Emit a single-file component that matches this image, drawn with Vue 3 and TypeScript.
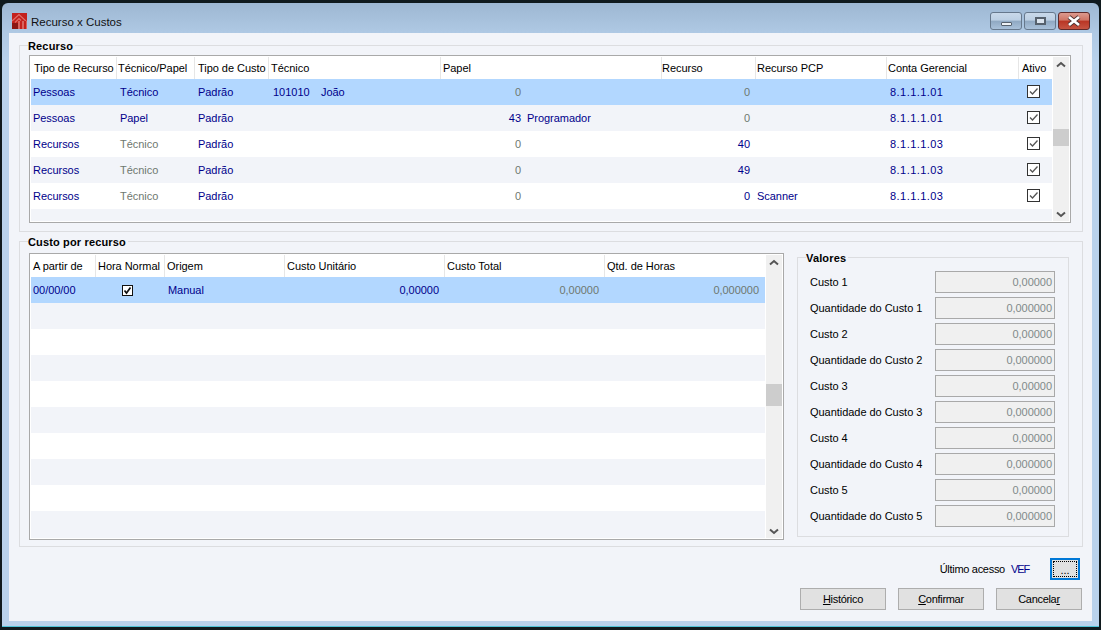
<script setup lang="ts">
const topCols = ['Tipo de Recurso','Técnico/Papel','Tipo de Custo','Técnico','Papel','Recurso','Recurso PCP','Conta Gerencial','Ativo']
const topRows = [
  { t:'Pessoas', p:'Técnico', c:'Padrão', tec:'101010', nome:'João', pap:'0', papN:'', r:'0', pcp:'', conta:'8.1.1.1.01', gray:false },
  { t:'Pessoas', p:'Papel', c:'Padrão', tec:'', nome:'', pap:'43', papN:'Programador', r:'0', pcp:'', conta:'8.1.1.1.01', gray:false },
  { t:'Recursos', p:'Técnico', c:'Padrão', tec:'', nome:'', pap:'0', papN:'', r:'40', pcp:'', conta:'8.1.1.1.03', gray:true },
  { t:'Recursos', p:'Técnico', c:'Padrão', tec:'', nome:'', pap:'0', papN:'', r:'49', pcp:'', conta:'8.1.1.1.03', gray:true },
  { t:'Recursos', p:'Técnico', c:'Padrão', tec:'', nome:'', pap:'0', papN:'', r:'0', pcp:'Scanner', conta:'8.1.1.1.03', gray:true },
]
const costCols = ['A partir de','Hora Normal','Origem','Custo Unitário','Custo Total','Qtd. de Horas']
const emptyRows = [1,2,3,4,5,6,7,8]
const valores = [
  ['Custo 1','0,00000'],['Quantidade do Custo 1','0,000000'],
  ['Custo 2','0,00000'],['Quantidade do Custo 2','0,000000'],
  ['Custo 3','0,00000'],['Quantidade do Custo 3','0,000000'],
  ['Custo 4','0,00000'],['Quantidade do Custo 4','0,000000'],
  ['Custo 5','0,00000'],['Quantidade do Custo 5','0,000000'],
]
</script>

<template>
  <div class="screen">
    <div class="window">
      <header class="titlebar">
        <svg class="logo" width="15" height="16" viewBox="0 0 15 16">
          <rect width="15" height="16" fill="#c4211c"/>
          <rect y="10" width="6" height="6" fill="#8c1613"/>
          <path d="M0 8 L7 1.5 L15 9 M3 9.5 L7 5.5 L9 7.5" fill="none" stroke="#e0706a" stroke-width="1.2"/>
          <rect x="6.5" y="8" width="8.5" height="8" fill="#eaa9a3"/>
          <rect x="7.5" y="8" width="3" height="8" fill="#c4211c"/>
          <rect x="11.5" y="8" width="3" height="8" fill="#c4211c"/>
        </svg>
        <span class="title">Recurso x Custos</span>
        <div class="controls">
          <div class="ctl"><i class="min"></i></div>
          <div class="ctl"><i class="max"></i></div>
          <div class="ctl close">
            <svg width="18" height="12" viewBox="0 0 18 12">
              <path d="M4 2 L14 10 M14 2 L4 10" stroke="#4a3030" stroke-width="4.4"/>
              <path d="M4 2 L14 10 M14 2 L4 10" stroke="#fff" stroke-width="2.8"/>
            </svg>
          </div>
        </div>
      </header>

      <main class="client">
        <fieldset class="group g-top">
          <legend>Recurso</legend>
          <div class="grid-box">
            <div class="grid-main">
              <div class="row head cols-top">
                <div v-for="c in topCols" :key="c" class="hcell">{{ c }}</div>
              </div>
              <div v-for="(r,i) in topRows" :key="i" class="row cols-top" :class="i === 0 ? 'sel' : i % 2 ? 'alt' : 'plain'">
                <div class="cell">{{ r.t }}</div>
                <div class="cell pl3" :class="{ dim: r.gray }">{{ r.p }}</div>
                <div class="cell pl3">{{ r.c }}</div>
                <div class="cell tec"><span class="num">{{ r.tec }}</span><span>{{ r.nome }}</span></div>
                <div class="cell pap"><span class="papnum" :class="{ dim: r.pap === '0' }">{{ r.pap }}</span><span>{{ r.papN }}</span></div>
                <div class="cell right rec" :class="{ dim: r.r === '0' && !r.pcp }">{{ r.r }}</div>
                <div class="cell pcp">{{ r.pcp }}</div>
                <div class="cell conta">{{ r.conta }}</div>
                <div class="cell chk">
                  <svg width="13" height="13" viewBox="0 0 13 13"><rect x=".5" y=".5" width="12" height="12" fill="#fff" stroke="#333"/><path d="M3 6.5 L5.5 9 L10.5 3.5" fill="none" stroke="#555" stroke-width="1.3"/></svg>
                </div>
              </div>
            </div>
            <div class="sbar">
              <svg class="arrow" width="10" height="7" viewBox="0 0 10 7"><path d="M1 5.5 L5 2 L9 5.5" fill="none" stroke="#555" stroke-width="2"/></svg>
              <div class="track top-track"><div class="thumb"></div></div>
              <svg class="arrow" width="10" height="7" viewBox="0 0 10 7"><path d="M1 1.5 L5 5 L9 1.5" fill="none" stroke="#555" stroke-width="2"/></svg>
            </div>
          </div>
        </fieldset>

        <fieldset class="group g-cost">
          <legend>Custo por recurso</legend>
          <div class="cost-layout">
            <div class="grid-box cost-box">
              <div class="grid-main">
                <div class="row head cols-cost">
                  <div v-for="c in costCols" :key="c" class="hcell">{{ c }}</div>
                </div>
                <div class="row cols-cost sel">
                  <div class="cell">00/00/00</div>
                  <div class="cell hn">
                    <svg width="11" height="11" viewBox="0 0 11 11"><rect x=".5" y=".5" width="10" height="10" fill="#fff" stroke="#111"/><path d="M2.5 5.5 L4.5 8 L8.5 2.5" fill="none" stroke="#111" stroke-width="1.7"/></svg>
                  </div>
                  <div class="cell origem">Manual</div>
                  <div class="cell right pr6">0,00000</div>
                  <div class="cell right pr6 dim">0,00000</div>
                  <div class="cell right pr7 dim">0,000000</div>
                </div>
                <div v-for="n in emptyRows" :key="n" class="row" :class="n % 2 ? 'alt' : 'plain'"></div>
              </div>
              <div class="sbar">
                <svg class="arrow" width="10" height="7" viewBox="0 0 10 7"><path d="M1 5.5 L5 2 L9 5.5" fill="none" stroke="#555" stroke-width="2"/></svg>
                <div class="track cost-track"><div class="thumb"></div></div>
                <svg class="arrow" width="10" height="7" viewBox="0 0 10 7"><path d="M1 1.5 L5 5 L9 1.5" fill="none" stroke="#555" stroke-width="2"/></svg>
              </div>
            </div>
            <fieldset class="group g-val">
              <legend>Valores</legend>
              <div v-for="v in valores" :key="v[0]" class="val-row">
                <span>{{ v[0] }}</span>
                <div class="input">{{ v[1] }}</div>
              </div>
            </fieldset>
          </div>
        </fieldset>

        <div class="access">
          <span class="ult">Último acesso</span>
          <span class="vef">VEF</span>
          <button class="btn-dots"><span>...</span></button>
        </div>
        <div class="actions">
          <button class="btn"><u>H</u>istórico</button>
          <button class="btn"><u>C</u>onfirmar</button>
          <button class="btn">Cancela<u>r</u></button>
        </div>
      </main>
    </div>
  </div>
</template>

<style>
html, body { margin: 0; background: #101a1e; }
</style>

<style scoped>
.screen { width: 1101px; height: 630px; box-sizing: border-box; padding: 3px 2px 3px 2px; background: #101a1e; overflow: hidden; font: 11px "Liberation Sans", "Noto Sans", sans-serif; color: #000; letter-spacing: -.04px; }
.window { height: 624px; display: flex; flex-direction: column; background: #b9d2ec; border-radius: 6px 6px 0 0; padding: 0 7px 6px 7px; box-sizing: border-box; background-image: linear-gradient(180deg, #9db7d2 0, #afc9e4 30px, #b9d2ec 60px); box-shadow: inset 0 -1px 0 #4fc3d8; }
.titlebar { height: 30px; flex: none; display: flex; align-items: center; position: relative; }
.logo { margin: 6px 4px 0 3px; }
.title { font: 11.5px "Liberation Sans", sans-serif; letter-spacing: 0; color: #111; margin-top: 8px; }
.controls { margin-left: auto; display: flex; gap: 2px; align-self: flex-start; margin-top: 9px; margin-right: 2px; }
.ctl { width: 30px; height: 16px; border: 1px solid #66788c; border-radius: 3px; box-sizing: content-box; display: flex; align-items: center; justify-content: center; background: linear-gradient(180deg, #c9d9ea 0, #bccfe3 45%, #8fa8c2 50%, #a9c1da 100%); }
.ctl i { display: block; box-sizing: border-box; }
.min { width: 11px; height: 4px; background: #eef2f6; border: 1px solid #56616d; margin-top: 6px; border-radius: 1px; }
.max { width: 11px; height: 8px; border: 2px solid #56616d; background: #dbe4ee; }
.close { background: linear-gradient(180deg, #dd9a8e 0, #cf7464 45%, #b93524 50%, #c55442 100%); border-color: #5f2a2a; }
.client { flex: 1; background: #f2f4f9; display: flex; flex-direction: column; padding: 0 9px 0 10px; min-height: 0; }

.group { margin: 0; padding: 0; border: 1px solid #dcdde0; min-width: 0; box-sizing: border-box; }
.group legend { font-weight: 700; font-size: 11px; letter-spacing: .15px; padding: 0 2px 0 0; margin-left: -1px; line-height: 13px; color: #000; transform: translateY(1px); }
.g-top { height: 193px; margin-top: 6px; padding: 3px 11px 0 9px; }
.g-cost { height: 312px; margin-top: 3px; padding: 5px 12px 0 9px; }
.cost-layout { display: flex; gap: 13px; align-items: flex-start; }
.grid-box { display: flex; border: 1px solid #a9a9a9; background: #fff; box-sizing: border-box; padding: 1px; }
.g-top .grid-box { height: 168px; }
.cost-box { width: 755px; height: 287px; flex: none; }
.grid-main { flex: 1; min-width: 0; background: #f2f4f9; }
.row { height: 26px; box-sizing: border-box; display: grid; align-items: center; color: #00008b; }
.head { height: 22px; background: #fff; color: #000; }
.cols-top { grid-template-columns: 86px 78px 74px 172px 221px 94px 131px 132px 32px; }
.cols-cost { grid-template-columns: 65px 69px 120px 160px 160px 161px; }
.hcell { height: 100%; display: flex; align-items: center; padding-left: 3px; box-sizing: border-box; border-right: 1px solid #e6e6e6; white-space: nowrap; overflow: hidden; }
.hcell:last-child { border-right: 0; }
.cols-top .hcell:nth-child(2) { padding-left: 1px; }
.cols-top .hcell:nth-child(3) { padding-left: 3px; }
.cols-top .hcell:nth-child(4) { padding-left: 2px; }
.cols-top .hcell:nth-child(5) { padding-left: 2px; }
.cols-top .hcell:nth-child(6) { padding-left: 0; }
.cols-top .hcell:nth-child(7), .cols-top .hcell:nth-child(8) { padding-left: 1px; }
.cols-top .hcell:nth-child(9) { padding-left: 3px; }
.cols-cost .hcell { padding-left: 2px; }
.cell { padding-left: 2px; white-space: nowrap; display: flex; align-items: center; height: 100%; box-sizing: border-box; }
.pl3 { padding-left: 3px; }
.sel { background: #b2d7ff; }
.alt { background: #f2f4f9; }
.plain { background: #fff; }
.dim { color: #6e7870; }
.right { justify-content: flex-end; padding-right: 5px; }
.rec { padding-right: 6px; }
.pcp { padding-left: 1px; }
.chk { justify-content: center; padding: 0 4px 1px 0; }
.hn { justify-content: center; padding: 0 7px 0 0; }
.tec .num { margin-left: 2px; width: 48px; letter-spacing: 0; }
.pap { justify-content: flex-start; }
.papnum { width: 78px; text-align: right; margin-right: 6px; }
.conta { padding-left: 3px; letter-spacing: .45px; }
.origem { padding-left: 3px; }
.pr6 { padding-right: 6px; }
.pr7 { padding-right: 7px; }
.sbar { width: 17px; flex: none; background: #f0f0f0; border-left: 1px solid #fff; display: flex; flex-direction: column; align-items: center; justify-content: space-between; padding: 4px 0 3px; box-sizing: border-box; }
.arrow { flex: none; }
.track { flex: 1; width: 100%; position: relative; }
.thumb { position: absolute; left: 0; right: 0; background: #cdcdcd; }
.top-track .thumb { top: 61px; height: 17px; }
.cost-track .thumb { top: 118px; height: 22px; }

.g-val { width: 272px; height: 286px; margin-top: -2px; padding: 7px 13px 0 12px; flex: none; }
.g-val legend { margin-left: -4px; }
.val-row { height: 22px; margin-bottom: 4px; display: flex; align-items: center; justify-content: space-between; }
.input { width: 120px; height: 22px; box-sizing: border-box; border: 1px solid #a9a9a9; background: #f0f0f0; color: #808a8a; text-align: right; line-height: 20px; padding-right: 2px; }

.access { height: 22px; margin-top: 11px; display: flex; align-items: center; padding-right: 3px; }
.ult { margin-left: auto; letter-spacing: -.3px; }
.vef { color: #00008b; margin-left: 6px; margin-right: 21px; letter-spacing: -1.1px; }
.btn-dots { width: 30px; height: 22px; padding: 1px; border: 2px solid #0078d7; background: #e1e1e1; box-sizing: border-box; display: flex; }
.btn-dots span { flex: 1; border: 1px dotted #000; font: 11px "Liberation Sans", sans-serif; line-height: 17px; text-align: center; }
.actions { display: flex; justify-content: flex-end; gap: 12px; margin-top: 8px; padding-right: 1px; }
.btn { width: 86px; height: 22px; padding: 0; border: 1px solid #adadad; background: #e1e1e1; font: 11px "Liberation Sans", sans-serif; letter-spacing: -.3px; color: #000; }
</style>
